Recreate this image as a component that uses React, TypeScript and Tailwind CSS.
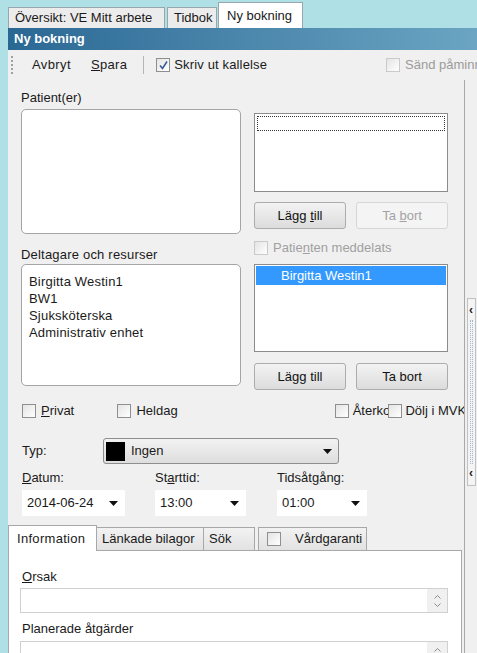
import React from "react";

const font = { fontFamily: '"Liberation Sans", Arial, sans-serif' };

function Check({ checked = false, disabled = false }: { checked?: boolean; disabled?: boolean }) {
  return (
    <span
      className={`inline-flex w-[14px] h-[14px] shrink-0 items-center justify-center border bg-gradient-to-br from-[#e4e4e4] to-white ${
        disabled ? "border-[#cacaca]" : "border-[#8f8f8f]"
      }`}
    >
      {checked && (
        <svg width="11" height="11" viewBox="0 0 11 11">
          <path d="M2 5.5 L4.5 8.5 L9 1.5" fill="none" stroke="#3c5a9a" strokeWidth="1.6" />
        </svg>
      )}
    </span>
  );
}

function Arrow() {
  return (
    <svg width="9" height="5" viewBox="0 0 9 5">
      <path d="M0 0 H9 L4.5 5 Z" fill="#111" />
    </svg>
  );
}

function Btn({ label, disabled = false }: { label: React.ReactNode; disabled?: boolean }) {
  return (
    <div
      className={`flex-1 h-[27px] flex items-center justify-center rounded-[3px] border text-[13px] ${
        disabled
          ? "border-[#d6d6d6] bg-[#f4f4f4] text-[#a3a3a3]"
          : "border-[#acacac] bg-gradient-to-b from-[#f3f3f3] to-[#dcdcdc] text-[#111]"
      }`}
    >
      {label}
    </div>
  );
}

function Spin() {
  return (
    <div className="ml-auto w-[20px] h-full flex flex-col items-center justify-center gap-[4px] bg-[#f0f0f0]">
      <svg width="7" height="4" viewBox="0 0 7 4"><path d="M0.5 3.5 L3.5 0.5 L6.5 3.5" fill="none" stroke="#8a8a8a" /></svg>
      <svg width="7" height="4" viewBox="0 0 7 4"><path d="M0.5 0.5 L3.5 3.5 L6.5 0.5" fill="none" stroke="#8a8a8a" /></svg>
    </div>
  );
}

export default function App() {
  return (
    <div className="w-[477px] h-[653px] overflow-hidden bg-[#aee0e5] text-[13px] text-[#1a1a1a] flex flex-col" style={font}>
      {/* tab strip */}
      <div className="h-[28px] shrink-0 flex items-end pl-[8px]">
        <div className="h-[21px] w-[157px] px-[6px] flex items-center bg-[#ececec] border border-b-0 border-[#98a6ad]">Översikt: VE Mitt arbete</div>
        <div className="h-[21px] w-[50px] ml-[2px] px-[6px] flex items-center bg-[#ececec] border border-b-0 border-[#98a6ad]">Tidbok</div>
        <div className="h-[26px] w-[85px] ml-[1px] px-[8px] flex items-center bg-white border border-b-0 border-[#98a6ad]">Ny bokning</div>
      </div>

      <div className="ml-[8px] flex-1 flex flex-col bg-[#f0f0f0]">
        {/* title bar */}
        <div className="h-[22px] shrink-0 flex items-center pl-[6px] bg-gradient-to-r from-[#2a6894] to-[#6ba5c3] text-white font-bold text-[13px]">
          Ny bokning
        </div>

        {/* toolbar */}
        <div className="h-[30px] shrink-0 flex items-center">
          <div className="ml-[3px] h-[18px] w-[2px] border-l-2 border-dotted border-[#a0a0a0]" />
          <span className="ml-[19px] tracking-[0.4px]">Avbryt</span>
          <span className="ml-[20px] tracking-[0.3px]"><span className="underline">S</span>para</span>
          <div className="ml-[16px] h-[18px] w-px bg-[#b5b5b5]" />
          <span className="ml-[12px] flex items-center gap-[4px] tracking-[0.15px]">
            <Check checked />
            Skriv ut kallelse
          </span>
          <span className="ml-auto flex items-center gap-[5px] text-[#9b9b9b] whitespace-nowrap overflow-hidden w-[91px]">
            <Check disabled />
            Sänd påminnelse
          </span>
        </div>

        {/* body */}
        <div className="flex-1 flex">
          <div className="w-[457px] shrink-0 border-r border-[#a8a8a8] flex flex-col">
            <div className="flex gap-[13px] pl-[13px] pt-[10px]">
              {/* left column */}
              <div className="w-[220px] flex flex-col">
                <div className="h-[15px] leading-[15px]">Patient(er)</div>
                <div className="mt-[4px] h-[125px] rounded-[5px] border border-[#a5a5a5] bg-white" />
                <div className="mt-[13px] h-[15px] leading-[15px] tracking-[0.2px]">Deltagare och resurser</div>
                <div className="mt-[2px] h-[122px] rounded-[5px] border border-[#a5a5a5] bg-white pl-[7px] pt-[8px] leading-[17px] tracking-[0.2px]">
                  <div>Birgitta Westin1</div>
                  <div>BW1</div>
                  <div>Sjuksköterska</div>
                  <div>Administrativ enhet</div>
                </div>
              </div>

              {/* right column */}
              <div className="w-[194px] flex flex-col">
                <div className="mt-[23px] h-[79px] border border-[#8c8c8c] bg-white p-[2px]">
                  <div className="h-[15px] border border-dotted border-[#333]" />
                </div>
                <div className="mt-[10px] flex gap-[10px]">
                  <Btn label={<span>Lägg <span className="underline">t</span>ill</span>} />
                  <Btn label={<span>Ta <span className="underline">b</span>ort</span>} disabled />
                </div>
                <div className="mt-[11px] h-[15px] flex items-center gap-[5px] text-[#a0a0a0]">
                  <Check disabled />
                  <span>Patie<span className="underline">n</span>ten meddelats</span>
                </div>
                <div className="mt-[9px] h-[88px] border border-[#8c8c8c] bg-white p-[1px]">
                  <div className="h-[19px] bg-[#3399ff] text-white pl-[25px] leading-[19px]">Birgitta Westin1</div>
                </div>
                <div className="mt-[11px] flex gap-[10px]">
                  <Btn label="Lägg till" />
                  <Btn label="Ta bort" />
                </div>
              </div>
            </div>

            {/* checkbox row */}
            <div className="mt-[13px] h-[15px] flex items-center pl-[14px]">
              <span className="flex items-center gap-[5px] w-[96px]">
                <Check />
                <span><span className="underline">P</span>rivat</span>
              </span>
              <span className="flex items-center gap-[5px]">
                <Check />
                Heldag
              </span>
              <span className="ml-[157px] w-[54px] overflow-hidden whitespace-nowrap flex items-center gap-[4px]">
                <Check />
                Återkomst
              </span>
              <span className="w-[76px] overflow-hidden whitespace-nowrap flex items-center gap-[3px]">
                <Check />
                Dölj i MVK
              </span>
            </div>

            {/* typ */}
            <div className="mt-[20px] flex items-center pl-[14px]">
              <span className="w-[81px]">Typ:</span>
              <div className="w-[236px] h-[26px] rounded-[3px] border border-[#8e8e8e] bg-gradient-to-b from-[#f2f2f2] to-[#dedede] flex items-center pl-[2px] pr-[6px]">
                <span className="w-[19px] h-[19px] bg-black" />
                <span className="ml-[6px]">Ingen</span>
                <span className="ml-auto"><Arrow /></span>
              </div>
            </div>

            {/* datum row */}
            <div className="mt-[6px] flex pl-[14px]">
              <div className="w-[133px] flex flex-col">
                <span className="h-[15px] leading-[15px]"><span className="underline">D</span>atum:</span>
                <div className="mt-[5px] w-[103px] h-[26px] bg-white flex items-center pl-[5px] pr-[7px]">
                  2014-06-24<span className="ml-auto"><Arrow /></span>
                </div>
              </div>
              <div className="w-[122px] flex flex-col">
                <span className="h-[15px] leading-[15px]">St<span className="underline">a</span>rttid:</span>
                <div className="mt-[5px] w-[91px] h-[26px] bg-white flex items-center pl-[5px] pr-[7px]">
                  13:00<span className="ml-auto"><Arrow /></span>
                </div>
              </div>
              <div className="flex flex-col">
                <span className="h-[15px] leading-[15px]">Tidsåt<span className="underline">g</span>ång:</span>
                <div className="mt-[5px] w-[90px] h-[26px] bg-white flex items-center pl-[5px] pr-[7px]">
                  01:00<span className="ml-auto"><Arrow /></span>
                </div>
              </div>
            </div>

            {/* inner tabs */}
            <div className="mt-[8px] h-[26px] flex items-end">
              <div className="h-[26px] w-[89px] bg-white border border-b-0 border-[#a8a8a8] flex items-center pl-[8px] relative z-10 -mb-px tracking-[0.3px]">Information</div>
              <div className="h-[23px] w-[107px] bg-gradient-to-b from-[#f2f2f2] to-[#e2e2e2] border border-l-0 border-b-0 border-[#a8a8a8] flex items-center pl-[5px]">Länkade bilagor</div>
              <div className="h-[23px] w-[51px] bg-gradient-to-b from-[#f2f2f2] to-[#e2e2e2] border border-l-0 border-b-0 border-[#a8a8a8] flex items-center pl-[5px]">Sök</div>
              <div className="ml-[3px] h-[23px] w-[109px] bg-gradient-to-b from-[#f2f2f2] to-[#e2e2e2] border border-b-0 border-[#a8a8a8] flex items-center pl-[8px] gap-[14px]">
                <Check />
                Vårdgaranti
              </div>
            </div>
            <div className="flex-1 w-[454px] bg-white border border-[#a8a8a8] pl-[11px] pr-[13px]">
              <div className="mt-[18px] h-[15px] leading-[15px] pl-[2px]"><span className="underline">O</span>rsak</div>
              <div className="mt-[4px] h-[25px] border border-[#d0d0d0] flex">
                <Spin />
              </div>
              <div className="mt-[8px] h-[15px] leading-[15px] pl-[2px]">Planerade åtgärder</div>
              <div className="mt-[5px] h-[25px] border border-[#d0d0d0] flex">
                <Spin />
              </div>
            </div>
          </div>

          {/* splitter gutter */}
          <div className="flex-1 flex flex-col items-center">
            <div className="mt-[218px] w-[9px] h-[188px] border border-[#c0c0c0] bg-[#f4f4f4] flex flex-col items-center">
              <span className="mt-[6px] text-[12px] leading-[11px] font-bold">&lsaquo;</span>
              <div className="flex-1 my-[4px] w-[3px] border-x border-dotted border-[#9fb8cf]" />
              <span className="mb-[6px] text-[12px] leading-[11px] font-bold">&lsaquo;</span>
            </div>
          </div>
        </div>
      </div>
    </div>
  );
}
